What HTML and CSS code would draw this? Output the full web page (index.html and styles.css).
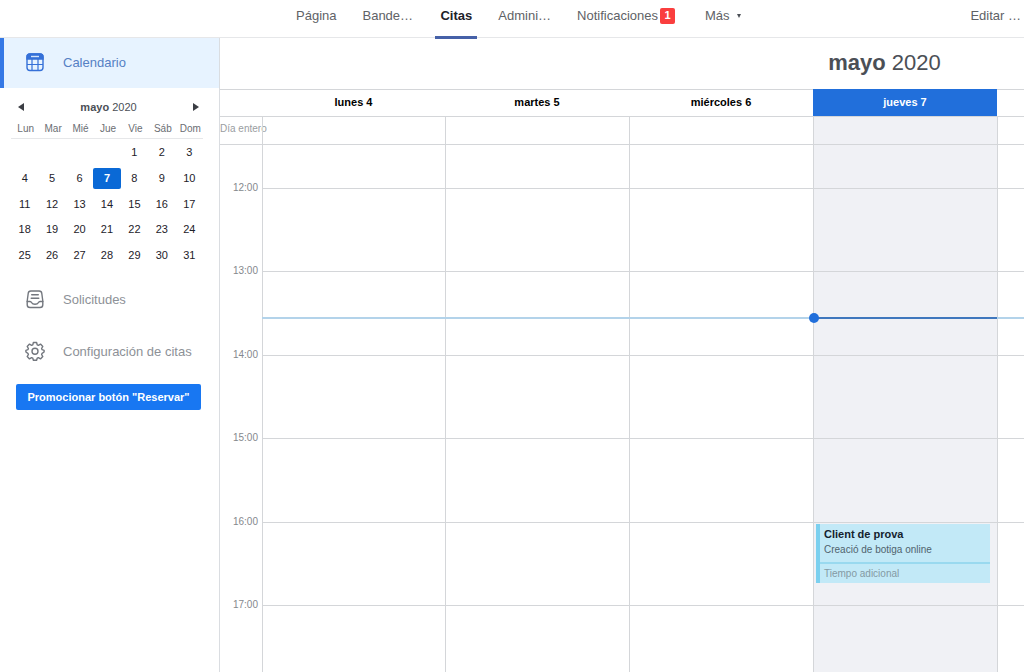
FILE: index.html
```html
<!DOCTYPE html>
<html lang="es">
<head>
<meta charset="utf-8">
<meta name="viewport" content="width=device-width, initial-scale=1">
<title>Citas</title>
<link rel="stylesheet" href="styles.css">
</head>
<body>
<nav class="topnav">
  <a class="tab" href="#">Página</a>
  <a class="tab tab-clipped" href="#">Bande…</a>
  <a class="tab tab-active" href="#">Citas</a>
  <a class="tab" href="#">Admini…</a>
  <a class="tab tab-wide" href="#">Notificaciones<span class="badge">1</span></a>
  <a class="tab" href="#">Más <span class="caret"></span></a>
  <a class="tab tab-edit" href="#">Editar …</a>
</nav>
<div class="layout">
  <aside class="sidebar">
    <a class="side-item side-active" href="#">
      <svg class="side-icon" viewBox="0 0 20 20" fill="none" stroke="currentColor" stroke-width="1.4">
        <rect x="2" y="2" width="16" height="16.500" rx="3"/>
        <path d="M2 7V5a3 3 0 0 1 3-3h10a3 3 0 0 1 3 3v2z" fill="currentColor"/>
        <path d="M2 12.500h16M7 7v11M13 7v11" stroke-width="1.200"/>
        <path d="M6 4.500h8" stroke="#d3e4fb"/>
      </svg>
      Calendario
    </a>
    <section class="mini">
      <header class="mini-head">
        <button class="arrow arrow-prev" type="button" aria-label="Mes anterior"></button>
        <span><b>mayo</b> 2020</span>
        <button class="arrow arrow-next" type="button" aria-label="Mes siguiente"></button>
      </header>
      <table class="mini-table">
        <thead><tr><th>Lun</th><th>Mar</th><th>Mié</th><th>Jue</th><th>Vie</th><th>Sáb</th><th>Dom</th></tr></thead>
        <tbody>
          <tr><td></td><td></td><td></td><td></td><td>1</td><td>2</td><td>3</td></tr>
          <tr><td>4</td><td>5</td><td>6</td><td><span class="today">7</span></td><td>8</td><td>9</td><td>10</td></tr>
          <tr><td>11</td><td>12</td><td>13</td><td>14</td><td>15</td><td>16</td><td>17</td></tr>
          <tr><td>18</td><td>19</td><td>20</td><td>21</td><td>22</td><td>23</td><td>24</td></tr>
          <tr><td>25</td><td>26</td><td>27</td><td>28</td><td>29</td><td>30</td><td>31</td></tr>
        </tbody>
      </table>
    </section>
    <a class="side-item" href="#">
      <svg class="side-icon" viewBox="0 0 20 20" fill="none" stroke="currentColor" stroke-width="1.400" stroke-linecap="round" stroke-linejoin="round">
        <path d="M2.200 12 3.200 4.500A2.700 2.700 0 0 1 5.900 2h8.200a2.700 2.700 0 0 1 2.700 2.500l1 7.500v3.700a2.800 2.800 0 0 1-2.800 2.800H5a2.800 2.800 0 0 1-2.800-2.800z"/>
        <path d="M2.200 12.500H5c1 0 1.300.5 1.700 1.300.5 1 1 1.500 3.300 1.500s2.800-.5 3.300-1.500c.4-.8.7-1.300 1.700-1.300h2.800M6.700 5.700h6.600M6.200 9.200h7.600"/>
      </svg>
      Solicitudes
    </a>
    <a class="side-item" href="#">
      <svg class="side-icon" viewBox="0 0 20 20" fill="none" stroke="currentColor" stroke-width="1.400" stroke-linejoin="round">
        <path d="M8.400 1.500h3.200l.6 2.300 1.200.5 2.100-1.200 2.300 2.300-1.200 2.100.5 1.200 2 .7v1.600l-2 1.300-.5 1.200 1.200 2.100-2.300 2.300-2.100-1.200-1.200.5-.6 2h-3.200l-.6-2-1.200-.5-2.100 1.200-2.300-2.300 1.200-2.100-.5-1.200-2-1.300V9.400l2-.7.5-1.200-1.200-2.100 2.300-2.300 2.100 1.200 1.200-.5z"/>
        <circle cx="10" cy="10.200" r="3"/>
      </svg>
      Configuración de citas
    </a>
    <button class="promo" type="button">Promocionar botón "Reservar"</button>
  </aside>
  <main class="main">
    <div class="week">
      <h1 class="title"><b>mayo</b> 2020</h1>
      <table class="grid">
        <colgroup><col class="col-time"><col class="col-first"><col><col><col><col><col><col></colgroup>
        <thead>
          <tr><th></th><th>lunes 4</th><th>martes 5</th><th>miércoles 6</th><th class="day-now">jueves 7</th><th></th><th></th><th></th></tr>
        </thead>
        <tbody>
          <tr class="row-allday"><td class="allday">Día entero</td><td></td><td></td><td></td><td class="now"></td><td></td><td></td><td></td></tr>
          <tr class="row-part"><td></td><td></td><td></td><td></td><td class="now"></td><td></td><td></td><td></td></tr>
          <tr class="hour"><td class="time"><span>12:00</span></td><td></td><td></td><td></td><td class="now"></td><td></td><td></td><td></td></tr>
          <tr class="hour hour-current"><td class="time"><span>13:00</span></td><td></td><td></td><td></td><td class="now"><i class="dot"></i></td><td></td><td></td><td></td></tr>
          <tr class="hour"><td class="time"><span>14:00</span></td><td></td><td></td><td></td><td class="now"></td><td></td><td></td><td></td></tr>
          <tr class="hour"><td class="time"><span>15:00</span></td><td></td><td></td><td></td><td class="now"></td><td></td><td></td><td></td></tr>
          <tr class="hour"><td class="time"><span>16:00</span></td><td></td><td></td><td></td><td class="now">
            <article class="event">
              <div class="event-main"><b>Client de prova</b><span>Creació de botiga online</span></div>
              <div class="event-extra">Tiempo adicional</div>
            </article></td><td></td><td></td><td></td></tr>
          <tr class="hour"><td class="time"><span>17:00</span></td><td></td><td></td><td></td><td class="now"></td><td></td><td></td><td></td></tr>
        </tbody>
      </table>
    </div>
  </main>
</div>
</body>
</html>
```
FILE: styles.css
```css
* { box-sizing: border-box; }
body {
  margin: 0;
  height: 100vh;
  display: flex;
  flex-direction: column;
  overflow: hidden;
  background: #fff;
  color: #1d2129;
  font-family: "Liberation Sans", Arial, sans-serif;
  font-size: 12px;
}
a { color: inherit; text-decoration: none; }
button { font-family: inherit; border: 0; padding: 0; cursor: pointer; }

.topnav {
  display: flex;
  flex: none;
  gap: 16px;
  height: 38px;
  padding-left: 291px;
  border-bottom: 1px solid #e6e7e9;
  color: #606266;
  font-size: 13px;
  line-height: 31px;
}
.tab { height: 39px; padding: 0 5px; white-space: nowrap; }
.tab-clipped { min-width: 62px; }
.tab-active { color: #1d2129; font-weight: bold; border-bottom: 3px solid #4661a8; }
.tab-wide { margin-right: 4px; }
.badge {
  display: inline-block;
  width: 15px;
  height: 16px;
  margin-left: 2px;
  border-radius: 2px;
  background: #fa3e3e;
  color: #fff;
  font-size: 11px;
  font-weight: bold;
  line-height: 15px;
  text-align: center;
  vertical-align: 1px;
}
.caret {
  display: inline-block;
  margin-left: 4px;
  border: 2px solid transparent;
  border-top: 4px solid #4b4f56;
  border-bottom: 0;
  vertical-align: 2px;
}
.tab-edit { margin-left: auto; padding-right: 3px; }

.layout { flex: 1; display: flex; min-height: 0; }
.sidebar { flex: none; width: 220px; border-right: 1px solid #dadde1; }
.side-item {
  display: flex;
  align-items: center;
  gap: 18px;
  height: 52px;
  padding-left: 25px;
  color: #8d9197;
  font-size: 13px;
}
.side-icon { width: 20px; height: 20px; color: #73777e; }
.side-active {
  height: 50px;
  padding: 0 0 2px 21px;
  border-left: 4px solid #3578e5;
  background: #e7f3ff;
  color: #5580c4;
}
.side-active .side-icon { color: #3570d8; }

.mini { padding: 10px 16px 6px 11px; }
.mini-head {
  display: flex;
  align-items: center;
  justify-content: space-between;
  padding: 0 4px 0 7px;
  height: 18px;
  color: #4b4f56;
  font-size: 11px;
}
.arrow { width: 6px; height: 8px; background: #3b3e44; }
.arrow-prev { clip-path: polygon(100% 0, 100% 100%, 0 50%); }
.arrow-next { clip-path: polygon(0 0, 100% 50%, 0 100%); }
.mini-table { width: 100%; table-layout: fixed; border-collapse: separate; border-spacing: 0; }
.mini-table th {
  height: 23px;
  padding: 2px 0 0 2px;
  border-bottom: 1px solid #e6e7e9;
  color: #6b6e73;
  font-size: 10px;
  font-weight: normal;
  text-align: center;
}
.mini-table td { height: 26px; padding: 1px 0 0; text-align: center; font-size: 11px; line-height: 13px; }
.mini-table tr:nth-child(3) td, .mini-table tr:nth-child(5) td { height: 25px; }
.today {
  display: block;
  height: 21px;
  border-radius: 2px;
  background: #0a69d6;
  color: #fff;
  font-weight: bold;
  line-height: 20px;
}
.promo {
  display: block;
  margin: 7px 18px 0 16px;
  width: 185px;
  height: 26px;
  border-radius: 2px;
  background: #1877f2;
  color: #fff;
  font-size: 11px;
  font-weight: bold;
}

.main { flex: 1; min-width: 0; overflow: hidden; }
.week { min-width: 1329px; }
.title {
  margin: 0;
  height: 51px;
  color: #4b4f56;
  font-size: 22px;
  font-weight: normal;
  line-height: 49px;
  text-align: center;
}
.grid { width: 100%; table-layout: fixed; border-collapse: separate; border-spacing: 0; }
.col-time { width: 42px; }
.col-first { width: 183px; }
.grid th {
  height: 27px;
  padding: 0 0 2px;
  border-top: 1px solid #d4d6d9;
  color: #000;
  font-size: 11px;
}
.grid .day-now { border-color: #216fdb; background: #216fdb; color: #fff; }
.grid td {
  position: relative;
  padding: 0;
  border: solid #d4d6d9;
  border-width: 1px 0 0 1px;
  vertical-align: top;
}
.grid td:first-child { border-left: 0; }
.now { background: #f0f1f5; }
.row-allday td { height: 28px; }
.grid .allday {
  color: #9a9da1;
  font-size: 10px;
  line-height: 24px;
  white-space: nowrap;
}
.row-part td { height: 44px; }
.hour td { height: 83px; }
.hour:nth-child(even) td { height: 84px; }
.grid .time { border-top: 0; color: #85888d; font-size: 10px; text-align: right; }
.time span { position: absolute; top: -6px; right: 4px; line-height: 12px; }
.hour-current td:not(.time)::after {
  content: "";
  position: absolute;
  top: 45px;
  left: -1px;
  right: 0;
  height: 2px;
  background: #b3d3ea;
}
.hour-current td.now::after { background: #3f77bd; }
.dot {
  position: absolute;
  z-index: 1;
  top: 41px;
  left: -5px;
  width: 10px;
  height: 10px;
  border-radius: 50%;
  background: #216fdb;
}
.event {
  position: absolute;
  top: 1px;
  left: 2px;
  right: 7px;
  border-left: 4px solid #7bd0ef;
  background: #c2e9f7;
  font-size: 10px;
}
.event-main {
  display: flex;
  flex-direction: column;
  height: 40px;
  padding: 3px 4px 0;
  border-bottom: 2px solid #99d9ef;
  color: #50636d;
  line-height: 15px;
}
.event-main b { color: #14222e; font-size: 11px; }
.event-extra { padding: 0 4px; color: #8499a3; line-height: 19px; }
```
